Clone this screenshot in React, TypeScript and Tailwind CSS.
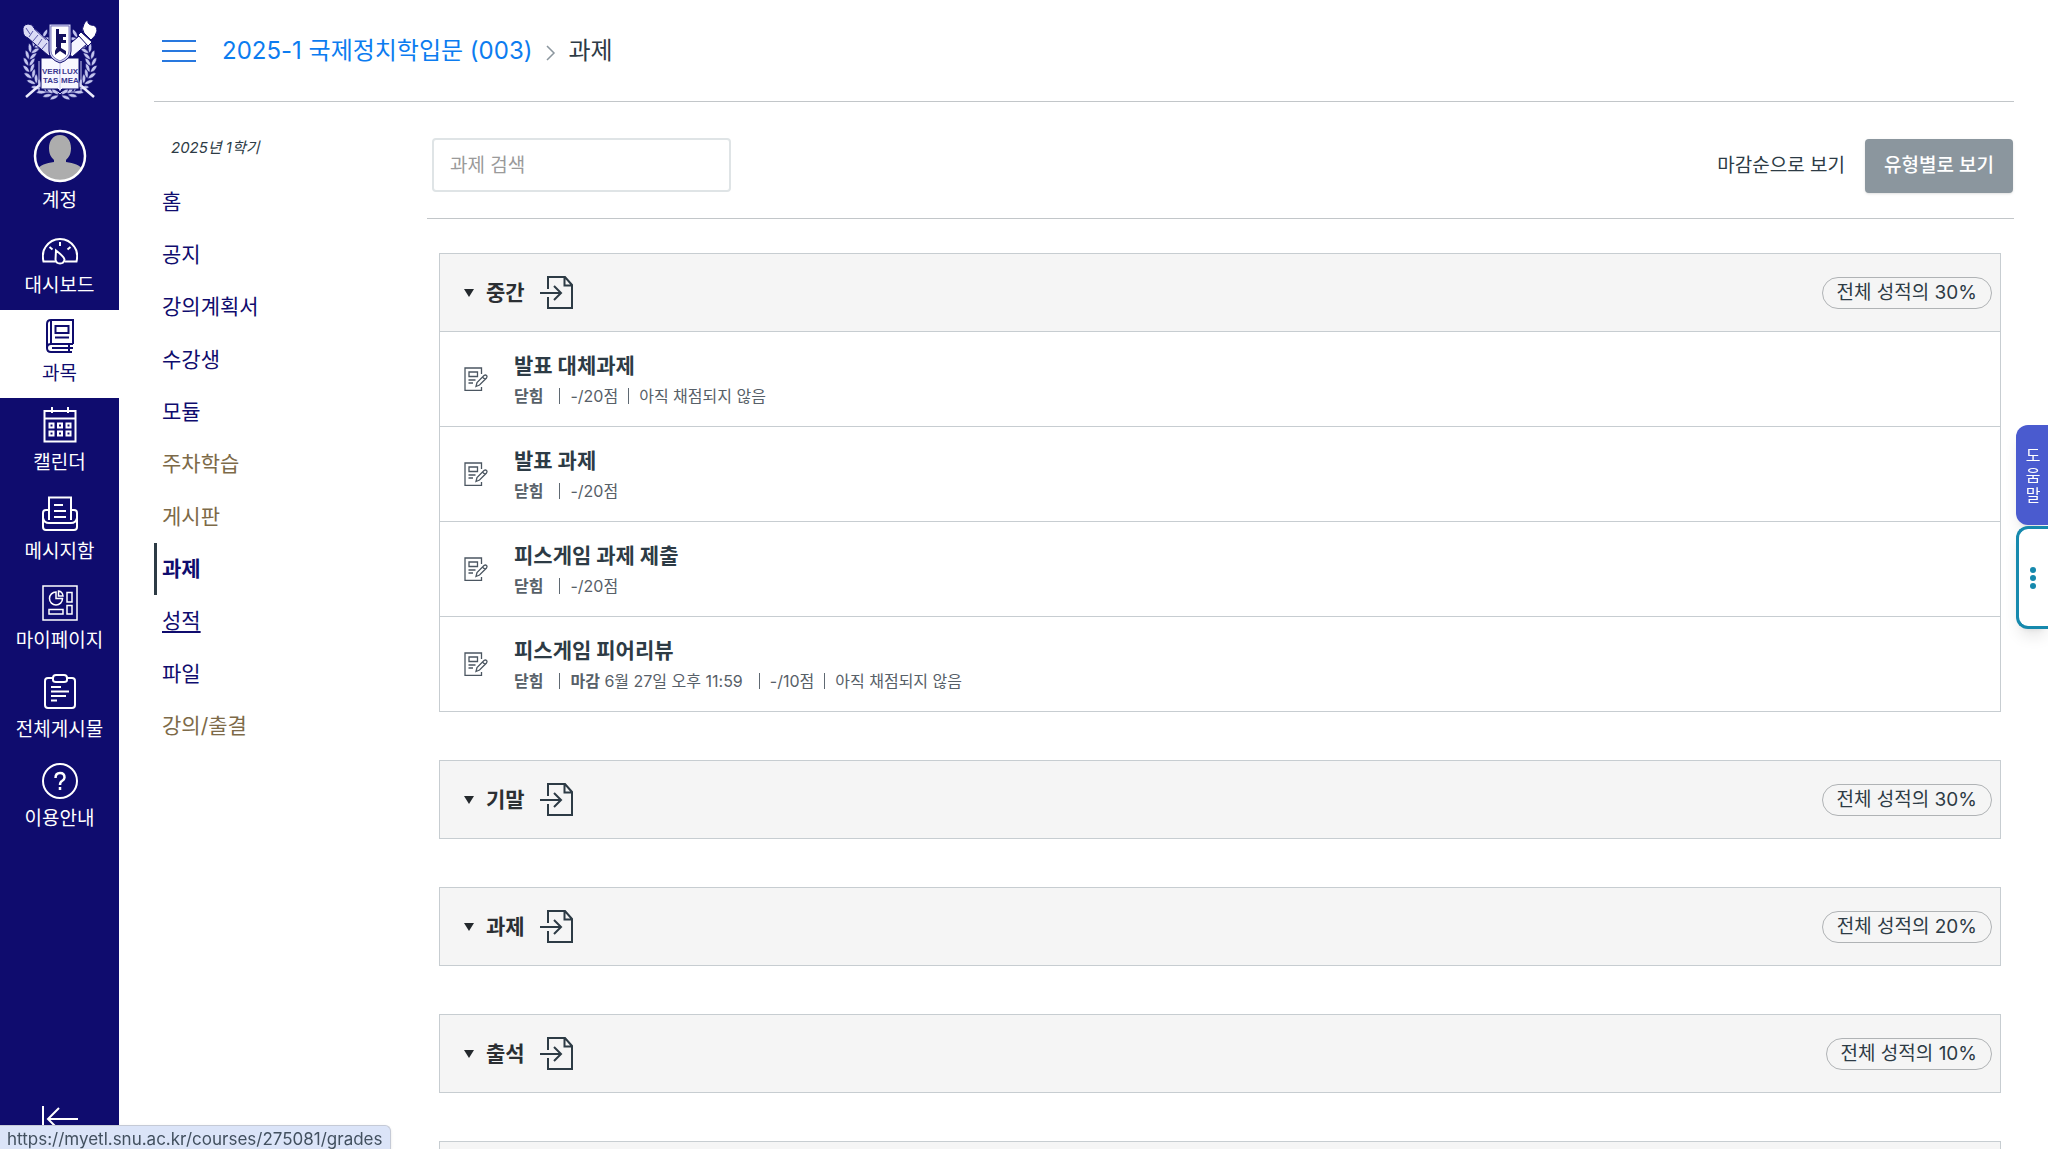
import type { ReactNode } from "react";

type NavItem = { label: string; state?: "muted" | "active" | "hover" };
type Assignment = { title: string; due?: string; points: string; note?: string };
type Group = { name: string; weight: string; items: Assignment[] };

const courseNav: NavItem[] = [
  { label: "홈" },
  { label: "공지" },
  { label: "강의계획서" },
  { label: "수강생" },
  { label: "모듈" },
  { label: "주차학습", state: "muted" },
  { label: "게시판", state: "muted" },
  { label: "과제", state: "active" },
  { label: "성적", state: "hover" },
  { label: "파일" },
  { label: "강의/출결", state: "muted" },
];

const groups: Group[] = [
  {
    name: "중간",
    weight: "30%",
    items: [
      { title: "발표 대체과제", points: "-/20점", note: "아직 채점되지 않음" },
      { title: "발표 과제", points: "-/20점" },
      { title: "피스게임 과제 제출", points: "-/20점" },
      { title: "피스게임 피어리뷰", due: "6월 27일 오후 11:59", points: "-/10점", note: "아직 채점되지 않음" },
    ],
  },
  { name: "기말", weight: "30%", items: [] },
  { name: "과제", weight: "20%", items: [] },
  { name: "출석", weight: "10%", items: [] },
];

function Crest() {
  // laurel leaves run up both sides of the shield
  const angles = [98, 110, 122, 134, 146, 158, 170, 182, 194, 206, 218, 230, 242, 254];
  const branch = angles.map((a) => {
    const r = (a * Math.PI) / 180;
    const x = 50 + 31 * Math.cos(r);
    const y = 54 + 31 * Math.sin(r);
    return (
      <g key={a} transform={`translate(${x} ${y}) rotate(${a + 90})`}>
        <path d="M-3 0Q-2 -5 5 -6Q5 -1 -3 0ZM-3 0Q-2 5 5 6Q5 1 -3 0Z" />
      </g>
    );
  });
  return (
    <svg viewBox="12 10 76 80" className="h-20 w-[76px]" role="img" aria-label="서울대학교">
      <g fill="#c3c5ee" stroke="#0f0c6e" strokeWidth="0.500">
        {branch}
        <g transform="matrix(-1 0 0 1 100 0)">{branch}</g>
      </g>
      <path d="M16 87l16-14M84 87L68 73" stroke="#ececfd" strokeWidth="2.500" />
      <path d="M13 21q-1-6 5-7 5 0 6 4l22 19-7 9-21-18q-5-2-5-7z" fill="#dcdcf6" stroke="#0f0c6e" />
      <path d="M16 18l4 6m3-3l-4 6m9-2l-5 6m9-2l-4 6m9-2l-5 6M24 19l12 11" stroke="#5a58a8" fill="none" />
      <path d="M55 38l14-12 8 8-15 13z" fill="#f6f6ff" stroke="#0f0c6e" />
      <path d="M68 25l3-3 11 10-4 4z" fill="#fff" stroke="#0f0c6e" />
      <path d="M74 23q-3-4 0-9 1-3 4-4-1 4 3 5 6 0 6 6-1 5-6 9z" fill="#fff" stroke="#0f0c6e" />
      <path d="M31 48h17l2 2 2-2h17v31H52l-2 2-2-2H31z" fill="#f7f7ff" stroke="#0f0c6e" />
      <path d="M29 51v31h19l2 2 2-2h19V51M50 54v27" stroke="#c9c9ee" fill="none" />
      <path d="M39 14h22v27q0 8-11 12-11-4-11-12z" fill="#cfcff2" stroke="#0f0c6e" />
      <path d="M41 16h18v25q0 6-9 10-9-4-9-10z" fill="#fff" stroke="#6361ae" strokeWidth="0.800" />
      <path d="M46 19h3v5h7v3h-3v3h3v3h-5v5l5 3v4l-6-4-5 4v-4l2-4h-1z" fill="#15125f" />
      <g fill="#3c3991" fontFamily="Liberation Sans" fontSize="8" fontWeight="700">
        <text x="32" y="64">VERI</text>
        <text x="52" y="64">LUX</text>
        <text x="33" y="73">TAS</text>
        <text x="51" y="73">MEA</text>
      </g>
    </svg>
  );
}

function Icon({ children, size = "size-9" }: { children: ReactNode; size?: string }) {
  return (
    <svg viewBox="0 0 36 36" className={size} fill="none" stroke="currentColor" strokeWidth="2" aria-hidden="true">
      {children}
    </svg>
  );
}

const globalNav: { label: string; active?: boolean; icon: ReactNode }[] = [
  {
    label: "대시보드",
    icon: (
      <Icon>
        <path d="M13.500 31.500H1.500q-2-9 2-14.500Q9 9 18 9t14.500 8q4 5.500 2 14.500H23" />
        <path d="M18 12v4M7.500 17l3 2.500M28.500 17l-3 2.500M14 20.500l-.5 9q.5 4 4.500 4t4.500-4q-.5-3-8.500-9z" />
      </Icon>
    ),
  },
  {
    label: "과목",
    active: true,
    icon: (
      <Icon>
        <path d="M31 26V2H9Q5 2 5 6v24q0 4 4 4h21M5 30q0-4 4-4h22M10 30h21M27 26v8M9 3v23" />
        <path d="M13.500 8h13v7h-13zM13 19.500h14" />
      </Icon>
    ),
  },
  {
    label: "캘린더",
    icon: (
      <Icon>
        <path d="M2.500 4h31v30.500h-31zM2.500 11.500h31M10 0v6M26 0v6" />
        <path d="M7.500 16.500h4v4h-4zM16 16.500h4v4h-4zM24.500 16.500h4v4h-4zM7.500 24.500h4v4h-4zM16 24.500h4v4h-4zM24.500 24.500h4v4h-4z" />
      </Icon>
    ),
  },
  {
    label: "메시지함",
    icon: (
      <Icon>
        <path d="M7 24V1.500h22V24M7 14H4q-3 0-3 3v14q0 3 3 3h28q3 0 3-3V17q0-3-3-3h-3M1 22q1 5 6 5h22q5 0 6-5" />
        <path d="M12 9h9M12 15h12M12 21h12" />
      </Icon>
    ),
  },
  {
    label: "마이페이지",
    icon: (
      <Icon>
        <path strokeWidth="1.500" d="M1 1h34v34H1zM14 7a6.500 6.500 0 1 0 6.500 6.500H14zM16.500 11V6q4 .5 4.500 5zM25 7.500h5V17h-5zM25 20.500h5V29h-5zM7 24.500h14V29H7z" />
      </Icon>
    ),
  },
  {
    label: "전체게시물",
    icon: (
      <Icon>
        <path d="M11 4H6Q3 4 3 7v24q0 3 3 3h24q3 0 3-3V7q0-3-3-3h-5" />
        <path d="M14 1h8q3 0 3 3v2q0 2-3 2h-8q-3 0-3-2V4q0-3 3-3zM9 13h10M9 17.500h18M9 22h15M9 26.500h6" />
      </Icon>
    ),
  },
  {
    label: "이용안내",
    icon: (
      <Icon>
        <circle cx="18" cy="18" r="17" />
        <path strokeWidth="2.500" d="M13.500 15q0-5 4.500-5t4.500 4.500q0 2-2.500 3.500-2 1-2 4M18 24v3" />
      </Icon>
    ),
  },
];

function GlobalSidebar() {
  return (
    <aside className="flex w-[119px] shrink-0 flex-col bg-[#0f0c6e] text-[19px] leading-6 text-white">
      <a href="#home" className="flex justify-center pt-5">
        <Crest />
      </a>
      <a href="#account" className="mt-[29px] flex flex-col items-center">
        <svg viewBox="0 0 54 54" className="size-[54px]" aria-hidden="true">
          <clipPath id="avatar">
            <circle cx="27" cy="27" r="25" />
          </clipPath>
          <path clipPath="url(#avatar)" fill="#adadad" d="M27 6c7 0 11 6 11 13 0 6-2 9-5 12v2c8 1 14 3 17 8v13H4V41c3-5 9-7 17-8v-2c-3-3-5-6-5-12 0-7 4-13 11-13z" />
          <circle cx="27" cy="27" r="25" fill="none" stroke="#fff" strokeWidth="2.500" />
        </svg>
        <span className="mt-[6px]">계정</span>
      </a>
      <nav className="mt-[9px] flex flex-col" aria-label="전체 메뉴">
        {globalNav.map((item) => (
          <a
            key={item.label}
            href="#menu"
            className={`flex flex-col items-center gap-2 pt-2 ${item.active ? "mb-px bg-white pb-3 text-[#0f0c6e]" : item.label === "대시보드" ? "pb-3" : "pb-[13px]"}`}
          >
            {item.icon}
            <span className="whitespace-nowrap">{item.label}</span>
          </a>
        ))}
      </nav>
      <button type="button" className="mt-auto flex justify-center pb-3" aria-label="메뉴 접기">
        <Icon>
          <path d="M1 5v26M36 18H6M17 7L6 18l11 11" />
        </Icon>
      </button>
    </aside>
  );
}

function CourseNav() {
  return (
    <nav className="w-[273px] shrink-0 pt-[34px]" aria-label="과목 메뉴">
      <p className="pl-[17px] text-[15px] leading-6 text-[#2d3b45] italic">2025년 1학기</p>
      <ul className="mt-4 grid h-[576px] auto-rows-fr text-[21px] text-[#0f0c6e]">
        {courseNav.map(({ label, state }) => (
          <li
            key={label}
            className={`flex items-center border-l-3 pl-[5px] ${state === "active" ? "border-[#2d3b45] font-bold" : "border-transparent"}`}
          >
            <a
              href="#course"
              className={state === "muted" ? "text-[#7d6a48]" : state === "hover" ? "underline underline-offset-3" : ""}
            >
              {label}
            </a>
          </li>
        ))}
      </ul>
    </nav>
  );
}

function ImportIcon() {
  return (
    <svg viewBox="0 0 36 36" className="size-9" fill="none" stroke="#2d3b45" strokeWidth="2" aria-hidden="true">
      <path d="M9 14V2h17l7 8v23H9V22M25.500 2v8.500H33M1 18h21M15 11l7 7-7 7" />
    </svg>
  );
}

function AssignmentIcon() {
  return (
    <svg viewBox="0 0 24 24" className="size-6" fill="none" stroke="#4b5661" strokeWidth="1.300" aria-hidden="true">
      <path d="M17.500 7V1H1v22.500h16.500V20M5 5h8.500v4.500H5zM4.500 13h7M4.500 16h4.500" />
      <path d="M12 19.500l1-4 7-7q1.500-1 2.500 0t0 2.500l-7 7zM18.500 10l2.500 2.500" />
    </svg>
  );
}

function Bar() {
  return <span className="h-4 w-px bg-[#5f6972]" aria-hidden="true" />;
}

function AssignmentGroup({ group }: { group: Group }) {
  return (
    <section className="border border-b-0 border-[#c7cdd1]">
      <header className="flex h-[78px] items-center border-b border-[#c7cdd1] bg-[#f5f5f5] pr-2 pl-6">
        <button type="button" className="flex items-center text-[21px] font-bold text-[#2b2f33]">
          <svg viewBox="0 0 10 8" className="h-2 w-[10px]" aria-hidden="true">
            <path d="M0 0h10L5 8z" fill="#24292d" />
          </svg>
          <span className="ml-3">{group.name}</span>
        </button>
        <span className="ml-[14px]">
          <ImportIcon />
        </span>
        <span className="ml-auto rounded-full border border-[#b0b3b5] px-[14px] text-[19px] leading-[30px]">
          전체 성적의 {group.weight}
        </span>
      </header>
      <ul>
        {group.items.map((item) => (
          <li key={item.title} className="flex h-[95px] items-center border-b border-[#c7cdd1] pl-6">
            <AssignmentIcon />
            <div className="ml-[26px] pt-px">
              <a href="#assignment" className="block text-[21px] leading-8 font-bold text-[#2d3b45]">
                {item.title}
              </a>
              <div className="flex items-center gap-[10px] text-[16px] leading-7 text-[#576068]">
                <b className="mr-[6px]">닫힘</b>
                <Bar />
                {item.due && (
                  <>
                    <span className="mr-[6px]">
                      <b>마감</b> {item.due}
                    </span>
                    <Bar />
                  </>
                )}
                <span>{item.points}</span>
                {item.note && (
                  <>
                    <Bar />
                    <span>{item.note}</span>
                  </>
                )}
              </div>
            </div>
          </li>
        ))}
      </ul>
    </section>
  );
}

export default function App() {
  return (
    <div className="flex h-screen overflow-hidden bg-white font-[Inter,'Noto_Sans_CJK_KR',sans-serif] text-[#2d3b45]">
      <GlobalSidebar />
      <div className="min-w-0 flex-1 pr-[34px] pl-[35px]">
        <header className="flex h-[102px] items-center border-b border-[#c2c6c9] pl-2 text-[24px]">
          <button type="button" aria-label="과목 메뉴 열기">
            <svg viewBox="0 0 34 24" className="h-6 w-[34px]" stroke="#2878df" strokeWidth="2" aria-hidden="true">
              <path d="M0 2h34M0 12h34M0 22h34" />
            </svg>
          </button>
          <a href="#course" className="ml-[26px] text-[#0c7cf0]">
            2025-1 국제정치학입문 (003)
          </a>
          <svg viewBox="0 0 10 16" className="mr-3 ml-[14px] mt-1 h-4 w-[10px]" fill="none" stroke="#8b969e" strokeWidth="1.500" aria-hidden="true">
            <path d="M1 1l7 7-7 7" />
          </svg>
          <span>과제</span>
        </header>
        <div className="flex">
          <CourseNav />
          <main className="min-w-0 flex-1">
            <div className="flex h-[117px] items-center border-b border-[#c2c6c9] pt-3 pr-px pl-[5px] text-[19px]">
              <input
                type="search"
                aria-label="과제 검색"
                placeholder="과제 검색"
                className="mb-[2px] h-[54px] w-[299px] rounded border-2 border-[#dfe4e6] px-4 placeholder:text-[#9a9a9a]"
              />
              <button type="button" className="ml-auto px-5">
                마감순으로 보기
              </button>
              <button type="button" className="h-[54px] rounded-sm bg-[#8b969e] px-[19px] font-medium text-white shadow">
                유형별로 보기
              </button>
            </div>
            <div className="flex flex-col gap-12 pt-[34px] pr-[13px] pl-3">
              {groups.map((group) => (
                <AssignmentGroup key={group.name} group={group} />
              ))}
              <div className="h-20 border border-[#c7cdd1] bg-[#f5f5f5]" />
            </div>
          </main>
        </div>
      </div>

      {/* Docked help tabs */}
      <div className="fixed top-[425px] right-0 flex w-8 flex-col gap-px">
        <button
          type="button"
          className="flex h-[100px] flex-col items-center justify-center rounded-l-xl bg-[#4a5bcf] pl-[2px] text-[16px] leading-5 text-white shadow-lg"
        >
          <span>도</span>
          <span>움</span>
          <span>말</span>
        </button>
        <button
          type="button"
          aria-label="더보기"
          className="flex h-[103px] flex-col items-center justify-center gap-[2px] rounded-l-xl border-3 border-r-0 border-[#1689ad] bg-white pr-[2px] shadow-lg"
        >
          <i className="size-[6px] rounded-full bg-[#1689ad]" />
          <i className="size-[6px] rounded-full bg-[#1689ad]" />
          <i className="size-[6px] rounded-full bg-[#1689ad]" />
        </button>
      </div>

      {/* Link preview */}
      <div className="fixed bottom-0 left-0 h-6 rounded-tr-md border-t border-r border-[#c5cad6] bg-[#dbe4f8] px-[7px] text-[17px] leading-[26px] text-[#42505f] shadow">
        https://myetl.snu.ac.kr/courses/275081/grades
      </div>
    </div>
  );
}
